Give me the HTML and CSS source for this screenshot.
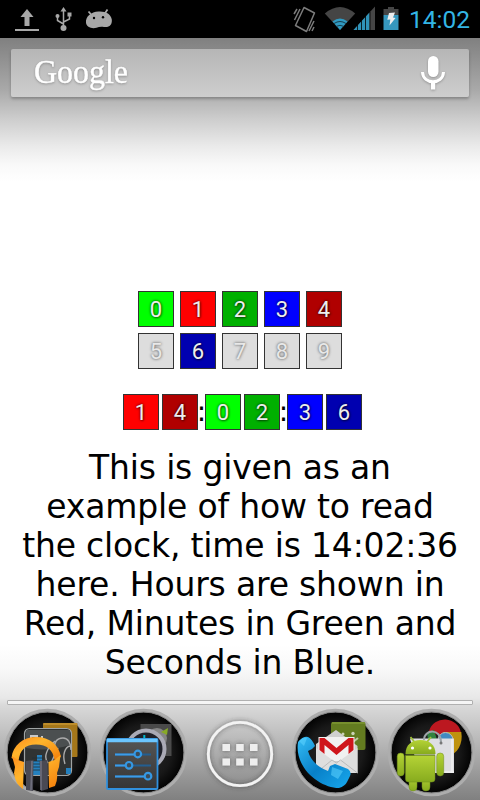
FILE: index.html
```html
<!DOCTYPE html>
<html lang="en">
<head>
<meta charset="utf-8">
<title>Home screen</title>
<link rel="stylesheet" href="styles.css">
</head>
<body>
<div class="screen">
  <header class="status">
    <svg class="status-left" width="120" height="38" viewBox="0 0 120 38" fill="#a8a8a8">
      <path d="M27 9l6.500 8h-4v9h-5v-9h-4zM15 29h24v2H15z"/>
      <g fill="none" stroke="#a8a8a8" stroke-width="1.500"><path d="M63.500 10v17M57.500 17v3.500l6 3.500M69.500 15v4l-6 3"/></g>
      <path d="M63.500 7l3 4.500h-6z"/><circle cx="63.500" cy="28" r="3"/><circle cx="57.500" cy="16" r="2"/><path d="M67.500 12.500h4v4h-4z"/>
      <path d="M88.500 11.500l3.500 4M107.500 9.500L104.500 14" stroke="#a8a8a8" stroke-width="1.800" fill="none"/>
      <path d="M98.500 11.500c7-.5 12.500 2.500 13.300 8 .6 5-2.400 8.300-7.800 7.500-3-.5-5-.2-7.500.7-5 1.500-10-1-10.500-5-.6-6 5-10.800 12.500-11.200z"/>
      <circle cx="94" cy="18" r="1.200" fill="#000"/><circle cx="103" cy="17.200" r="1.200" fill="#000"/>
    </svg>
    <svg class="status-right" width="120" height="38" viewBox="290 0 120 38">
      <g fill="none" stroke="#7c7c7c" stroke-width="1.500"><path d="M304 7.500l10.500 5.500-8 18.500-11-6z" stroke-linejoin="round"/><path d="M297 9l-3 5M300 9l-5.500 11M314 21l-5 10M314 27l-2 4"/></g>
      <path d="M324.800 13.500q15.200-13 30.400 0L340 30z" fill="#454545"/>
      <path d="M332.500 21.500q7.500-6 15 0L340 30z" fill="#2f9ac2"/>
      <g fill="none" stroke="#173d4c" stroke-width="1"><path d="M334 23.500q6-4 12 0M336.500 26.300q3.500-2 7 0"/></g>
      <path d="M353.500 30L375 6.500V30z" fill="#454545"/><path d="M353.500 30L369.500 12.500V30z" fill="#2f93b9"/>
      <path d="M357.500 23v7M361.500 19v11M365.500 15v15M370 12v18" stroke="#000" stroke-width=".8"/>
      <path d="M388 7h6v2h4.500v6h-15V9h4.500z" fill="#454545"/><path d="M383.500 15h15v15h-15z" fill="#3697bd"/>
      <path d="M389 13l6-.5-2 5 2.500.5-6 7.500.8-6-3 .2z" fill="#eee"/>
    </svg>
    <time class="status-time">14:02</time>
  </header>

  <div class="search">
    <svg class="logo" width="112" height="48" viewBox="0 0 112 48"><text x="23" y="34" textLength="94" lengthAdjust="spacingAndGlyphs">Google</text></svg>
    <svg class="mic" width="30" height="40" viewBox="418 53 30 40">
      <path d="M422.500 72c.5 13 20.500 13 21 0" fill="none" stroke="#fff" stroke-width="3"/>
      <rect x="428" y="56" width="10.500" height="21" rx="5.200" fill="#fff"/>
      <path d="M431 81h4.200v8.500H431z" fill="#fff"/>
    </svg>
  </div>

  <main class="widget">
    <div class="palette">
      <span class="cell lime">0</span><span class="cell red">1</span><span class="cell green">2</span><span class="cell blue">3</span><span class="cell maroon">4</span>
      <span class="cell off">5</span><span class="cell navy">6</span><span class="cell off">7</span><span class="cell off">8</span><span class="cell off">9</span>
    </div>
    <div class="clock">
      <div class="pair"><span class="cell red">1</span><span class="cell maroon">4</span></div>
      <span class="colon">:</span>
      <div class="pair"><span class="cell lime">0</span><span class="cell green">2</span></div>
      <span class="colon">:</span>
      <div class="pair"><span class="cell blue">3</span><span class="cell navy">6</span></div>
    </div>
    <p class="caption">This is given as an<br>example of how to read<br>the clock, time is 14:02:36<br>here. Hours are shown in<br>Red, Minutes in Green and<br>Seconds in Blue.</p>
  </main>

  <footer class="bottom">
    <div class="divider"></div>
    <svg class="dock" width="480" height="95" viewBox="0 705 480 95">
      <defs>
        <radialGradient id="disc"><stop offset="0" stop-color="#2b2b2b"/><stop offset=".65" stop-color="#181818"/><stop offset="1" stop-color="#000"/></radialGradient>
        <linearGradient id="orange" x2="1" y2="1"><stop stop-color="#ff8a1c"/><stop offset=".4" stop-color="#ffb52c"/><stop offset="1" stop-color="#f37a08"/></linearGradient>
        <linearGradient id="phone" x2="1" y2="1"><stop stop-color="#35bdf5"/><stop offset=".5" stop-color="#0880c8"/><stop offset="1" stop-color="#18a9ee"/></linearGradient>
        <linearGradient id="droid" x2="0" y2="1"><stop stop-color="#b5d336"/><stop offset="1" stop-color="#87ab1e"/></linearGradient>
        <linearGradient id="panel" x2="0" y2="1"><stop stop-color="#555"/><stop offset="1" stop-color="#353535"/></linearGradient>
        <filter id="soft" x="-20%" y="-20%" width="140%" height="140%"><feDropShadow dx="0" dy="0" stdDeviation="2.500" flood-color="#333" flood-opacity=".65"/></filter>
      </defs>
      <g fill="url(#disc)" stroke="#adadad" stroke-width="3.500">
        <circle cx="47.500" cy="752.500" r="42"/><circle cx="143.500" cy="752.500" r="42"/><circle cx="335.500" cy="752.500" r="42"/><circle cx="431.500" cy="752.500" r="42"/>
      </g>
      <g fill="none" stroke="#858585" stroke-width="1">
        <circle cx="47.500" cy="752.500" r="40.500"/><circle cx="143.500" cy="752.500" r="40.500"/><circle cx="335.500" cy="752.500" r="40.500"/><circle cx="431.500" cy="752.500" r="40.500"/>
      </g>

      <g>
        <rect x="43" y="723" width="34.500" height="34" rx="1" fill="#a5771a"/>
        <path d="M43.500 724h33.500" stroke="#c79531" stroke-width="1.500"/>
        <rect x="24.500" y="728.500" width="47" height="47" rx="5" fill="#303333" stroke="#a0a4a4" stroke-width="1.200"/>
        <path d="M26 730h44v15q-22 7-44 3z" fill="#4b4f50"/>
        <path d="M31 742v-6h6v4M42 742v-6" stroke="#c9c9c9" stroke-width="2" fill="none"/>
        <path d="M55 752c-2-10 2-14 8-14 5 0 8 5 8 12M55 741c-8 7-12 16-7 22M58 748l-8 17M70 746c-5 1-8 9-5 18" fill="none" stroke="#aaa" stroke-width="1.400"/>
        <path d="M37 755h5v20h-5zM33 761h4v14h-4zM66 768h5v6h-5z" fill="#2581bf"/>
        <path d="M32 758h12M32 761h12M32 764h12M32 767h12M32 770h12" stroke="#20303a" stroke-width=".8"/>
        <path d="M11.500 758C13 745 23 737 36 737c14 0 23 8 25 20l-6.500 3C53 750 47 744.500 36 744.500S20 750 18.500 761z" fill="url(#orange)"/>
        <path d="M12 756l6 4 6 2-1 27q-8-5-9-16l1-6zM60.500 755l-6 5-6 2 .5 26 6-2q3-7 2-13l2-6z" fill="url(#orange)"/>
        <path d="M26 761l7.500-1-.5 31-7-1zM39.500 761l8-1 .5 29-7 2z" fill="#494953"/><path d="M32 761l-1 29M41 761v29" stroke="#6f6f7d" stroke-width="1.600"/>
      </g>

      <g>
        <rect x="140.500" y="724" width="31" height="32" fill="#4a4a4a"/>
        <circle cx="157" cy="738" r="10" fill="#858585"/><path d="M161 732l7-4-1 7z" fill="#88aa27"/>
        <circle cx="146" cy="749" r="18.500" fill="#20212a" stroke="#aaaab5" stroke-width="4"/>
        <path d="M144.300 735v4" stroke="#00b9cf" stroke-width="2"/>
        <rect x="107" y="739" width="50.500" height="50" rx="1" fill="url(#panel)" stroke="#3190dc" stroke-width="1.800"/>
        <path d="M107 740.500h50.500" stroke="#6cc6ff" stroke-width="3.500"/>
        <g stroke="#235f91" stroke-width="2"><path d="M115 754.500h36M115 765.500h36M115 776.500h36"/></g>
        <path d="M115 754.500h20M115 765.500h11M115 776.500h30" stroke="#3c9ce8" stroke-width="2"/>
        <g fill="#3b4b58" stroke="#3598e3" stroke-width="2.200"><circle cx="137.800" cy="754" r="3.300"/><circle cx="129" cy="765.300" r="3.300"/><circle cx="148" cy="776.200" r="3.300"/></g>
      </g>

      <g filter="url(#soft)">
        <circle cx="240" cy="754" r="31.700" fill="none" stroke="#f3f3f3" stroke-width="2.800"/>
        <path d="M222.500 744h7.500v7h-7.500zM236.200 744h7.500v7h-7.500zM250 744h7.500v7H250zM222.500 758.500h7.500v7h-7.500zM236.200 758.500h7.500v7h-7.500zM250 758.500h7.500v7H250z" fill="#eee"/>
      </g>

      <g>
        <rect x="331" y="722" width="34.500" height="28" rx="2" fill="#637b20"/><path d="M332 723h33" stroke="#7c9632" stroke-width="1.500"/>
        <circle cx="353" cy="733.500" r="1.700" fill="#ccd2b7"/><circle cx="343" cy="734" r="1.500" fill="#ccd2b7"/><path d="M353 742l5-4" stroke="#bdc7a0" stroke-width="2"/>
        <path d="M316 744l20-14 21.500 16v27H316z" fill="#d0d0d0"/>
        <path d="M318.500 737h36v24h-36z" fill="#f1f1f1"/>
        <path d="M316 748l20.500 15 21-15v25H316z" fill="#dedede"/><path d="M316 773l16-13 4.500 3 4-3 17 13" fill="none" stroke="#bbb"/>
        <path d="M319.500 750v-12h5l12 10 12-10h5v12l-5 4v-9l-12 10-12-10v9z" fill="#cf151b"/>
        <path d="M298 742q5-6 10-5 4 2 7 9-3 4-7 5 4 14 20 20l2-5 5-2 13 5q4 3 2 7l-3 6q-2 4-8 6c-19 0-45-20-41-46z" fill="url(#phone)"/>
        <path d="M299 741q4-4 8-3l-3 8zM332 767l11 4-5 8-7-4z" fill="#5ed3ff" opacity=".55"/>
      </g>

      <g>
        <path d="M429 731a16.500 16.500 0 0 1 32 2l-18 4z" fill="#bc1820"/>
        <path d="M443 732h18.300c2 12-4 22-13 24z" fill="#bf920e"/>
        <path d="M427 733l7-3 4 13-9 2z" fill="#318240"/>
        <circle cx="445.500" cy="740" r="7.500" fill="#428ac0" stroke="#bbb"/>
        <path d="M410 738.500h44v34.500h-35z" fill="#dedee2"/><path d="M452 739v34M425 772h29" stroke="#f1f1f1" stroke-width="1.500"/>
        <path d="M424 740c0-11 17-12 17 2" fill="none" stroke="#9da3a8" stroke-width="2"/><circle cx="441" cy="743" r="1.500" fill="#777"/>
        <path d="M410.500 737l4 5M431 737l-4 5" stroke="#9fbf38" stroke-width="1.800"/>
        <path d="M405.500 754c0-9 6-14 15-14s15 5 15 14z" fill="url(#droid)"/>
        <circle cx="412.500" cy="748" r="1.600" fill="#fff"/><circle cx="430" cy="748" r="1.600" fill="#fff"/>
        <g fill="url(#droid)" stroke="#6f8c1c" stroke-width=".5"><rect x="397.200" y="753" width="7" height="23" rx="3.400"/><rect x="436.700" y="753" width="7" height="23" rx="3.400"/><rect x="409" y="775" width="8" height="16" rx="4"/><rect x="422" y="775" width="8" height="16" rx="4"/><path d="M405.500 755.500h29.500V779q0 3-3 3h-23.500q-3 0-3-3z"/></g>
        <path d="M405.500 755h29.500" stroke="#657f1b"/>
      </g>
    </svg>
  </footer>
</div>
</body>
</html>
```

FILE: styles.css
```css
* { box-sizing: border-box; }
body { margin: 0; }
.screen {
  width: 480px;
  height: 800px;
  overflow: hidden;
  display: flex;
  flex-direction: column;
  background: linear-gradient(#808080 38px, #a9a9a9 90px, #cdcdcd 119px, #eaeaea 146px, #f9f9f9 165px, #fff 182px, #fff 645px, #f8f8f8 670px, #e8e8e8 698px, #dadada 705px, #b0b0b0 750px, #808080 800px);
}
.status {
  height: 38px;
  background: #000;
  display: flex;
  align-items: center;
}
.status-right { margin-left: 170px; }
.status-time {
  margin-left: -1px;
  font: 24.5px/38px Roboto, sans-serif;
  color: #33b5e5;
  padding-top: 2px;
}
.search {
  height: 48px;
  margin: 11px 11px 0;
  border-radius: 2px;
  background: linear-gradient(#b6b6b6, #cecece);
  box-shadow: 0 2px 3px rgba(0, 0, 0, .25);
  display: flex;
  justify-content: space-between;
  align-items: center;
  padding-right: 21px;
}
.logo { overflow: visible; filter: drop-shadow(0 1px 1px rgba(0, 0, 0, .25)); }
.logo text { font: 34px "Liberation Serif", serif; fill: #fff; stroke: #fff; stroke-width: .4px; }
.mic { filter: drop-shadow(0 1px 1px rgba(0, 0, 0, .25)); }
.widget {
  flex: 1;
  padding-top: 194px;
  display: flex;
  flex-direction: column;
  align-items: center;
}
.palette {
  display: grid;
  grid-template-columns: repeat(5, 36px);
  gap: 6px;
}
.cell {
  width: 36px;
  height: 36px;
  border: 1px solid #333;
  font: 22px/36px Roboto, sans-serif;
  text-align: center;
  color: #eee;
  text-shadow: 0 0 3px rgba(0, 0, 0, .8), 1px 1px 2px rgba(0, 0, 0, .35);
}
.lime { background: #0f0; }
.red { background: #f00; }
.green { background: #00b000; }
.blue { background: #00f; }
.maroon { background: #b00000; }
.navy { background: #0000b0; }
.off { background: #ddd; }
.off { color: #e8e8e8; text-shadow: 0 0 3px rgba(0, 0, 0, .7); }
.clock {
  display: flex;
  margin-top: 25px;
  padding-left: 5px;
}
.pair { display: flex; gap: 3px; }
.colon {
  width: 7px;
  height: 36px;
  display: flex;
  justify-content: center;
  font: 28px/35px "DejaVu Sans", sans-serif;
}
.caption {
  margin: 18px 0 0;
  font: 33px/39px "DejaVu Sans", sans-serif;
  letter-spacing: -.18px;
  color: #000;
  text-align: center;
  white-space: nowrap;
}
.bottom { height: 100px; }
.divider {
  height: 5px;
  margin: 0 7px;
  border: 1px solid #b0b0b0;
  border-radius: 1px;
  background: #f5f5f5;
}
.dock { display: block; }
```
